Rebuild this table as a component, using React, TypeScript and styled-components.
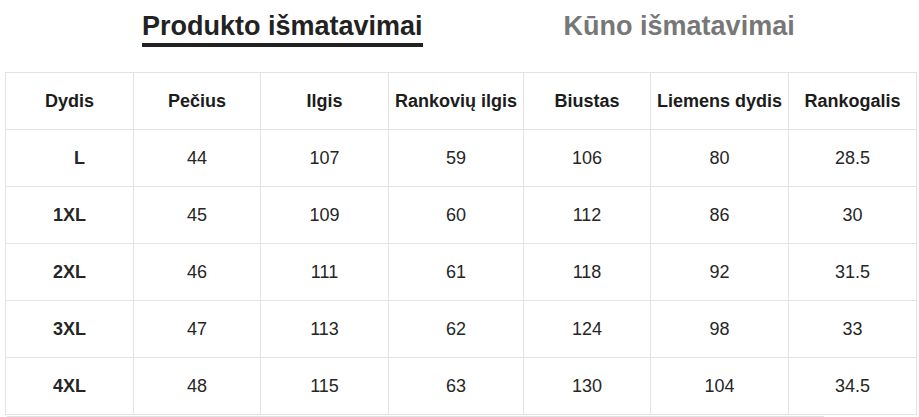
import React from "react";
import styled, { createGlobalStyle } from "styled-components";

const GlobalStyle = createGlobalStyle`
  html, body {
    margin: 0;
    padding: 0;
    background: #fff;
    font-family: "Liberation Sans", Arial, sans-serif;
  }
`;

const Page = styled.div`
  width: 919px;
  height: 417px;
  overflow: hidden;
`;

const Tabs = styled.div`
  display: flex;
  align-items: flex-start;
  gap: 141px;
  height: 72px;
  padding: 11px 0 0 142px;
  box-sizing: border-box;
`;

const Tab = styled.div<{ $active?: boolean }>`
  font-size: 27px;
  font-weight: bold;
  line-height: 31px;
  color: ${(p) => (p.$active ? "#222" : "#777")};
  padding-bottom: 1px;
  border-bottom: 4px solid ${(p) => (p.$active ? "#222" : "transparent")};
  cursor: pointer;
`;

const Table = styled.table`
  margin-left: 5px;
  border-collapse: collapse;
  table-layout: fixed;
  width: 912px;
`;

const Th = styled.th`
  height: 56px;
  border: 1px solid #e3e3e3;
  font-size: 18px;
  font-weight: bold;
  color: #1c1c1c;
  text-align: center;
  padding: 0;
  white-space: nowrap;
`;

const Td = styled.td<{ $bold?: boolean; $indent?: number }>`
  height: 56px;
  border: 1px solid #e3e3e3;
  font-size: 18px;
  font-weight: ${(p) => (p.$bold ? "bold" : "normal")};
  color: #262626;
  text-align: center;
  padding: 0 0 0 ${(p) => p.$indent ?? 0}px;
`;

const ScrollThumb = styled.div`
  margin: 1px 0 0 7px;
  width: 817px;
  height: 2px;
  background: #e2e2e2;
`;

const widths = [128, 127, 128, 135, 127, 138, 128];
const headers = ["Dydis", "Pečius", "Ilgis", "Rankovių ilgis", "Biustas", "Liemens dydis", "Rankogalis"];
const rows = [
  ["L", "44", "107", "59", "106", "80", "28.5"],
  ["1XL", "45", "109", "60", "112", "86", "30"],
  ["2XL", "46", "111", "61", "118", "92", "31.5"],
  ["3XL", "47", "113", "62", "124", "98", "33"],
  ["4XL", "48", "115", "63", "130", "104", "34.5"],
];

export default function App() {
  return (
    <Page>
      <GlobalStyle />
      <Tabs>
        <Tab $active>Produkto išmatavimai</Tab>
        <Tab>Kūno išmatavimai</Tab>
      </Tabs>
      <Table>
        <colgroup>
          {widths.map((w, i) => (
            <col key={i} style={{ width: w }} />
          ))}
        </colgroup>
        <thead>
          <tr>
            {headers.map((h) => (
              <Th key={h}>{h}</Th>
            ))}
          </tr>
        </thead>
        <tbody>
          {rows.map((r) => (
            <tr key={r[0]}>
              {r.map((c, i) => (
                <Td key={i} $bold={i === 0} $indent={i === 0 && c === "L" ? 20 : 0}>
                  {c}
                </Td>
              ))}
            </tr>
          ))}
        </tbody>
      </Table>
      <ScrollThumb />
    </Page>
  );
}
